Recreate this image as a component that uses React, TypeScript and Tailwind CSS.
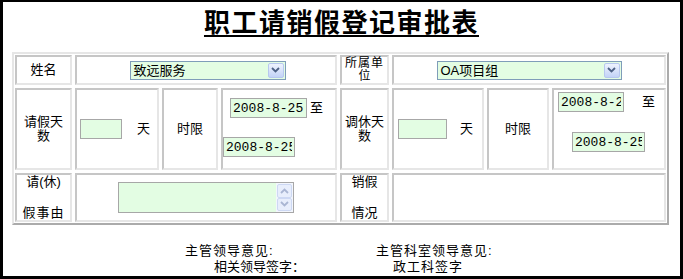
import React from 'react';

const cell = 'border-2 border-t-[#c6c6c6] border-l-[#c6c6c6] border-r-[#e6e6e6] border-b-[#e6e6e6]';
const field = 'border border-[#a7a7a7] bg-[#e3fde3] px-[2px] text-[13px] leading-none outline-none';
const mono = { fontFamily: '"Liberation Mono", monospace' };

const Chevron: React.FC<{ up?: boolean; color: string }> = ({ up, color }) => (
  <svg width="9" height="6" viewBox="0 0 9 6">
    <path d={up ? 'M1 5 L4.5 1.5 L8 5' : 'M1 1 L4.5 4.5 L8 1'} stroke={color} strokeWidth="1.8" fill="none" />
  </svg>
);

const Select: React.FC<{ value: string; className: string }> = ({ value, className }) => (
  <div className={`flex h-[19px] items-center border border-[#7f9db9] bg-[#e3fde3] ${className}`}>
    <span className="flex-1 pl-[3px] text-[13px] leading-none">{value}</span>
    <span className="mr-[1px] flex h-[15px] w-[16px] items-center justify-center rounded-[2px] border border-[#b7c8ef] bg-gradient-to-b from-[#eef3fe] to-[#c3d3f7]">
      <Chevron color="#4d6185" />
    </span>
  </div>
);

const DateBox: React.FC<{ value: string; className: string }> = ({ value, className }) => (
  <input readOnly value={value} style={mono} className={`h-[20px] ${field} ${className}`} />
);

export default function App() {
  return (
    <div
      className="box-border h-[279px] w-[683px] overflow-hidden border-[3px] border-t-2 border-black bg-white text-black"
      style={{ fontFamily: '"Liberation Sans", "Noto Sans CJK SC", sans-serif' }}
    >
      <h1 className="pt-[6px] text-center text-[26px] font-bold leading-[30px] tracking-[1.5px] underline underline-offset-[3px]">
        职工请销假登记审批表
      </h1>

      <div className="ml-[9px] mt-[14px] w-[657px] border-2 border-t-[#e6e6e6] border-l-[#e6e6e6] border-r-[#ababab] border-b-[#ababab] p-[1px]">
        <div className="grid grid-cols-[57px_84px_56px_116px_49px_92px_62px_114px] grid-rows-[30px_82px_49px] gap-[3px] text-[13px]">
          {/* row 1 */}
          <div className={`${cell} flex items-center justify-center`}>姓名</div>
          <div className={`${cell} col-span-3 flex items-center justify-center`}>
            <Select value="致远服务" className="ml-[3px] w-[156px]" />
          </div>
          <div className={`${cell} flex flex-col items-center justify-center text-[12px] leading-[13px]`}>
            <span className="tracking-[1px]">所属单</span>
            <span>位</span>
          </div>
          <div className={`${cell} col-span-3 flex items-center justify-center`}>
            <Select value="OA项目组" className="w-[185px]" />
          </div>

          {/* row 2 */}
          <div className={`${cell} flex flex-col items-center justify-center leading-[14px]`}>
            <span>请假天</span>
            <span>数</span>
          </div>
          <div className={`${cell} flex items-center`}>
            <input readOnly className={`ml-[3px] h-[20px] w-[42px] ${field}`} />
            <span className="ml-[15px]">天</span>
          </div>
          <div className={`${cell} flex items-center justify-center`}>时限</div>
          <div className={`${cell} flex flex-col`}>
            <div className="ml-[7px] mt-[8px] flex items-center">
              <DateBox value="2008-8-25" className="w-[77px]" />
              <span className="ml-[3px]">至</span>
            </div>
            <DateBox value="2008-8-25" className="mt-[19px] w-[72px]" />
          </div>
          <div className={`${cell} flex flex-col items-center justify-center leading-[14px]`}>
            <span>调休天</span>
            <span>数</span>
          </div>
          <div className={`${cell} flex items-center`}>
            <input readOnly className={`ml-[4px] h-[20px] w-[49px] ${field}`} />
            <span className="ml-[13px]">天</span>
          </div>
          <div className={`${cell} flex items-center justify-center`}>时限</div>
          <div className={`${cell} flex flex-col`}>
            <div className="ml-[4px] mt-[2px] flex items-center">
              <DateBox value="2008-8-25" className="w-[66px]" />
              <span className="ml-[18px]">至</span>
            </div>
            <DateBox value="2008-8-25" className="ml-[18px] mt-[20px] w-[73px]" />
          </div>

          {/* row 3 */}
          <div className={`${cell} flex flex-col items-center justify-between leading-[14px]`}>
            <span>请(休)</span>
            <span className="tracking-[1px]">假事由</span>
          </div>
          <div className={`${cell} col-span-3 flex items-center justify-center`}>
            <div className="ml-[-1px] flex h-[31px] w-[176px] border border-[#a7a7a7] bg-[#e3fde3]">
              <div className="flex-1" />
              <div className="flex w-[17px] flex-col justify-between bg-[#f3f6fd] p-[1px]">
                <span className="flex h-[14px] items-center justify-center rounded-[2px] border border-[#cdd8f3] bg-[#e8eefc]">
                  <Chevron up color="#aab6d3" />
                </span>
                <span className="flex h-[14px] items-center justify-center rounded-[2px] border border-[#cdd8f3] bg-[#e8eefc]">
                  <Chevron color="#aab6d3" />
                </span>
              </div>
            </div>
          </div>
          <div className={`${cell} flex flex-col items-center justify-between leading-[14px]`}>
            <span>销假</span>
            <span>情况</span>
          </div>
          <div className={`${cell} col-span-3`} />
        </div>
      </div>

      <div className="mt-[18px] flex text-[13px] leading-[16px]">
        <div className="ml-[182px] w-[191px]">
          <div className="tracking-[1px]">主管领导意见:</div>
          <div className="pl-[29px]">相关领导签字：</div>
        </div>
        <div>
          <div className="tracking-[1px]">主管科室领导意见:</div>
          <div className="pl-[17px] tracking-[1px]">政工科签字</div>
        </div>
      </div>
    </div>
  );
}
